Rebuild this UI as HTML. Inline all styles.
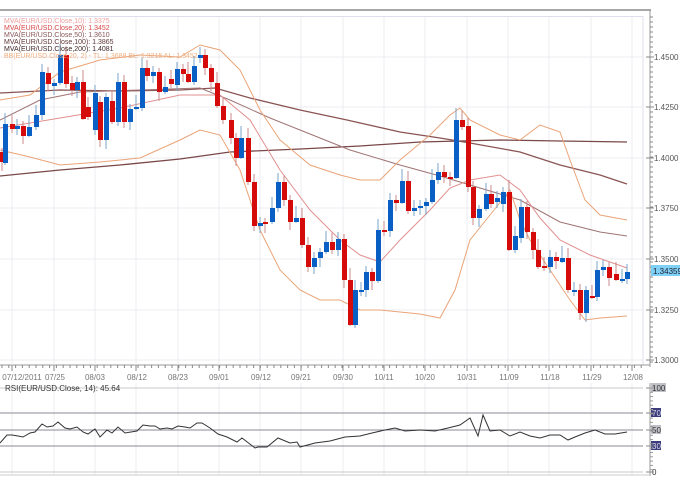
<!DOCTYPE html>
<html><head><meta charset="utf-8"><style>
body{margin:0;background:#fff;width:680px;height:477px;overflow:hidden;font-family:"Liberation Sans",sans-serif}
svg{position:absolute;left:0;top:0}
</style></head><body>
<svg id="s" width="680" height="477" xmlns="http://www.w3.org/2000/svg" font-family="Liberation Sans, sans-serif">
<rect x="0" y="9" width="651" height="2" fill="#a8a8a8"/>
<rect x="0" y="16" width="643" height="1" fill="#dde0ec"/>
<line x1="643" y1="16" x2="643" y2="365" stroke="#dde0ec"/>
<line x1="650" y1="10" x2="650" y2="367" stroke="#999"/>
<line x1="0" y1="365" x2="650" y2="365" stroke="#999"/>
<g id="grid" stroke="#ececf2" stroke-width="1"></g>
<g id="lines" fill="none"></g>
<g id="candles"></g>
<g id="ticks" stroke="#888"></g>
<g font-size="8" fill="#555" id="ylab"></g>
<rect x="651" y="265" width="29" height="11" fill="#7fd0f5"/>
<text x="653" y="274" font-size="8" fill="#223">1.34359</text>
<g font-size="8" fill="#777" id="xlab"></g>
<g font-size="7">
<text x="4" y="23" fill="#f0a0a0">MVA(EUR/USD.Close,10): 1.3375</text>
<text x="4" y="30" fill="#d84848">MVA(EUR/USD.Close,20): 1.3452</text>
<text x="4" y="37" fill="#8a5858">MVA(EUR/USD.Close,50): 1.3610</text>
<text x="4" y="44" fill="#603838">MVA(EUR/USD.Close,100): 1.3865</text>
<text x="4" y="51" fill="#402828">MVA(EUR/USD.Close,200): 1.4081</text>
<text x="4" y="58" fill="#f0b080">BB(EUR/USD.Close,20, 2) -  TL: 1.3688  BL: 1.3215  AL: 1.3452</text>
</g>
<g id="rsi"></g>
</svg>
<script>
var NS="http://www.w3.org/2000/svg";
function el(p,t,a,txt){var e=document.createElementNS(NS,t);for(var k in a)e.setAttribute(k,a[k]);if(txt)e.textContent=txt;document.getElementById(p).appendChild(e);return e;}
var gx=[12,54,95,136,178,219,260,301,343,384,425,467,508,549,591,632];
gx.forEach(function(x){el('grid','line',{x1:x,y1:17,x2:x,y2:365});el('grid','line',{x1:x,y1:383,x2:x,y2:475});});
var py=[57,107,158,208,259,310,360],pl=['1.4500','1.4250','1.4000','1.3750','1.3500','1.3250','1.3000'];
py.forEach(function(y,i){el('grid','line',{x1:0,y1:y,x2:643,y2:y});el('ylab','text',{x:654,y:y+3},pl[i]);el('ticks','line',{x1:646,y1:y,x2:654,y2:y});});
for(var y=17;y<365;y+=5)el('ticks','line',{x1:650,y1:y,x2:653,y2:y});
for(var x=2;x<645;x+=6.8)el('ticks','line',{x1:x,y1:365,x2:x,y2:368});
gx.forEach(function(x){el('ticks','line',{x1:x,y1:365,x2:x,y2:371});});
var xl=[[22,'07/12/2011'],[55,'07/25'],[95,'08/03'],[137,'08/12'],[178,'08/23'],[219,'09/01'],[261,'09/12'],[301,'09/21'],[343,'09/30'],[384,'10/11'],[425,'10/20'],[467,'10/31'],[509,'11/09'],[550,'11/18'],[592,'11/29'],[633,'12/08']];
xl.forEach(function(a){el('xlab','text',{x:a[0],y:380,'text-anchor':'middle'},a[1]);});
function pl2(pts,c,w){el('lines','polyline',{points:pts,stroke:c,'stroke-width':w||1});}
pl2("0,176 60,170 120,165 180,159 230,152 300,149 360,146 420,142 500,140 560,141 627,142","#7a4848",1.3);
pl2("0,93 60,90 120,91 180,90 215,88 250,98 300,110 347,120 400,132 440,138 470,143 520,152 560,165 600,175 627,184","#8a5454",1.3);
pl2("0,120 40,100 80,92 140,90 200,88 230,100 270,118 300,130 350,150 400,165 440,176 470,185 520,200 560,222 600,232 627,236","#a07474",1);
pl2("0,100 30,95 60,72 100,60 140,55 180,57 200,45 220,50 240,70 260,110 280,140 310,165 340,175 360,180 380,180 400,160 430,135 450,115 460,108 470,120 500,135 520,140 540,125 560,132 570,160 585,200 600,215 627,220","#eaa478",1);
pl2("0,150 30,157 60,165 100,162 140,158 180,140 200,130 220,135 240,170 260,230 280,270 300,290 320,300 340,300 360,310 380,310 420,314 440,318 455,290 470,240 490,215 510,190 520,220 530,240 550,270 570,300 585,320 600,318 627,316","#eaa478",1);
pl2("0,128 60,118 120,108 180,95 220,95 250,120 280,170 310,210 340,240 360,255 380,262 400,240 430,210 450,188 470,180 500,175 520,190 540,218 560,240 590,255 610,262 627,268","#e29090",1);
var C=[[2,152,162,'r'],[5,124,163,'b'],[12,124,129,'r'],[17,126,129,'b'],[23,126,136,'r'],[29,127,136,'b'],[36,115,127,'b'],[42,72,115,'b'],[48,73,84,'r'],[54,83,86,'b'],[60,55,83,'b'],[66,55,84,'r'],[72,83,90,'r'],[77,82,90,'b'],[83,82,119,'r'],[88,107,117,'r'],[95,93,130,'b'],[100,102,140,'r'],[106,97,140,'b'],[112,101,122,'r'],[118,82,122,'b'],[124,82,122,'r'],[130,109,122,'b'],[136,107,109,'b'],[142,68,108,'b'],[147,68,76,'r'],[153,72,76,'b'],[159,72,92,'r'],[165,87,92,'b'],[171,79,84,'r'],[177,69,85,'b'],[183,69,74,'r'],[188,74,82,'r'],[194,66,82,'b'],[200,55,58,'b'],[205,55,68,'r'],[211,68,82,'r'],[217,83,106,'r'],[223,106,120,'r'],[231,120,138,'r'],[236,138,158,'r'],[241,138,158,'b'],[248,138,182,'r'],[254,182,226,'r'],[260,223,226,'b'],[265,222,224,'r'],[272,208,222,'b'],[278,182,208,'b'],[284,182,200,'r'],[290,200,222,'r'],[296,218,222,'b'],[302,218,245,'r'],[308,245,267,'r'],[314,258,267,'b'],[320,252,258,'b'],[326,242,252,'b'],[332,242,250,'r'],[338,239,250,'b'],[344,239,280,'r'],[350,280,325,'r'],[355,290,325,'b'],[361,290,291,'b'],[366,272,290,'b'],[372,272,281,'r'],[378,230,281,'b'],[384,230,232,'r'],[390,200,231,'b'],[396,200,203,'r'],[402,181,203,'b'],[408,181,211,'r'],[414,208,211,'b'],[420,206,208,'b'],[426,202,206,'b'],[432,180,202,'b'],[438,172,180,'b'],[444,172,177,'r'],[450,177,178,'r'],[456,120,178,'b'],[462,120,127,'r'],[468,126,187,'r'],[473,187,218,'r'],[479,209,218,'b'],[486,194,209,'b'],[491,194,204,'r'],[497,198,202,'b'],[503,192,204,'b'],[509,192,250,'r'],[515,236,250,'b'],[521,207,238,'b'],[527,207,232,'r'],[533,232,250,'r'],[538,250,267,'r'],[544,266,267,'r'],[550,257,267,'b'],[556,257,261,'r'],[562,258,262,'b'],[568,258,290,'r'],[574,290,291,'b'],[580,290,313,'r'],[586,290,313,'b'],[592,296,297,'r'],[597,270,297,'b'],[603,267,270,'b'],[609,267,278,'r'],[616,274,280,'r'],[622,279,280,'b'],[627,272,279,'b']];
C.forEach(function(c,i){var b=c[3]=='b',ext=4+((i*7)%9);
el('candles','line',{x1:c[0],y1:c[1]-ext,x2:c[0],y2:c[2]+(13-ext),stroke:b?'#7aa4c8':'#c98a8a'});
el('candles','rect',{x:c[0]-2,y:c[1],width:5,height:Math.max(2,c[2]-c[1]),fill:b?'#0a5fc4':'#d50a0a'});});
var R=[388,413,430,446,472],RL=['100','70','50','30','0'];
R.forEach(function(y,i){el('rsi','line',{x1:0,y1:y,x2:643,y2:y,stroke:i==0||i==4?'#c8c8cc':'#8a8a96'});
var bg=(i==1||i==3)?'#3c3c7c':(i==4?'none':'#c0c0c8');
if(bg!='none')el('rsi','rect',{x:651,y:y-5,width:i==0?15:10,height:9,fill:bg});
el('rsi','text',{x:652,y:y+3,'font-size':'8',fill:(i==1||i==3)?'#dde':'#333'},RL[i]);
el('rsi','line',{x1:646,y1:y,x2:654,y2:y,stroke:'#888'});});
el('rsi','line',{x1:650,y1:383,x2:650,y2:476,stroke:'#999'});
for(var y=388;y<474;y+=4.3)el('rsi','line',{x1:650,y1:y,x2:653,y2:y,stroke:'#999'});
el('rsi','line',{x1:0,y1:475,x2:650,y2:475,stroke:'#ccc'});
el('rsi','text',{x:5,y:391,'font-size':'8',fill:'#333'},'RSI(EUR/USD.Close, 14): 45.64');
var rp="0,443 7,435 12,435 18,436 23,437 30,433 35,432 42,424 47,427 53,426 58,422 65,428 70,429 77,427 83,432 88,434 95,429 100,437 107,430 112,433 118,427 125,433 137,431 143,425 150,426 155,426 160,429 167,428 172,429 178,426 185,427 190,428 197,423 202,423 210,428 218,434 227,437 237,442 242,438 255,448 258,447 267,447 278,438 290,443 297,442 300,447 315,443 330,441 345,437 360,436 372,433 385,430 395,428 405,431 420,430 435,431 448,428 460,425 470,418 478,436 483,415 490,431 500,430 510,436 520,432 530,436 540,438 550,435 560,435 568,440 575,437 585,433 595,430 605,434 615,434 627,432";
el('rsi','polyline',{points:rp,fill:'none',stroke:'#333','stroke-width':1});
</script>
</body></html>
